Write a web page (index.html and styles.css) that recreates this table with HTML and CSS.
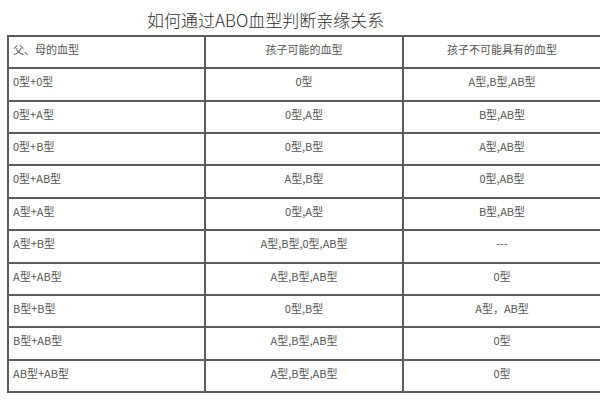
FILE: index.html
```html
<!DOCTYPE html>
<html lang="zh-CN">
<head>
<meta charset="utf-8">
<title>如何通过ABO血型判断亲缘关系</title>
<link rel="stylesheet" href="styles.css">
</head>
<body>
<h1 class="title">如何通过ABO血型判断亲缘关系</h1>
<table class="blood">
  <colgroup>
    <col class="c1"><col class="c2"><col class="c3">
  </colgroup>
  <tr class="head"><td class="left">父、母的血型</td><td>孩子可能的血型</td><td>孩子不可能具有的血型</td></tr>
  <tr><td class="left">0型+0型</td><td>0型</td><td>A型,B型,AB型</td></tr>
  <tr><td class="left">0型+A型</td><td>0型,A型</td><td>B型,AB型</td></tr>
  <tr><td class="left">0型+B型</td><td>0型,B型</td><td>A型,AB型</td></tr>
  <tr><td class="left">0型+AB型</td><td>A型,B型</td><td>0型,AB型</td></tr>
  <tr><td class="left">A型+A型</td><td>0型,A型</td><td>B型,AB型</td></tr>
  <tr><td class="left">A型+B型</td><td>A型,B型,0型,AB型</td><td>---</td></tr>
  <tr><td class="left">A型+AB型</td><td>A型,B型,AB型</td><td>0型</td></tr>
  <tr><td class="left">B型+B型</td><td>0型,B型</td><td>A型，AB型</td></tr>
  <tr><td class="left">B型+AB型</td><td>A型,B型,AB型</td><td>0型</td></tr>
  <tr><td class="left">AB型+AB型</td><td>A型,B型,AB型</td><td>0型</td></tr>
</table>
</body>
</html>
```
FILE: styles.css
```css
html, body {
  margin: 0;
  padding: 0;
  background: #fff;
}
body {
  width: 600px;
  height: 400px;
  overflow: hidden;
  font-family: "Noto Sans CJK SC", "Noto Sans", sans-serif;
}
.title {
  margin: 0;
  height: 35px;
  box-sizing: border-box;
  padding: 8px 0 0 147px;
  font-size: 17px;
  line-height: 24px;
  font-weight: 300;
  color: #2e2e2e;
}
.blood {
  margin-left: 7px;
  width: 593px;
  table-layout: fixed;
  border-collapse: collapse;
  font-size: 11px;
  color: #555;
}
.c1 { width: 197px; }
.c2 { width: 198px; }
.c3 { width: 198px; }
.blood td {
  border: 2px solid #5c5c5c;
  height: 32.36px;
  box-sizing: border-box;
  padding: 6px 4px 0;
  vertical-align: top;
  text-align: center;
  line-height: 13px;
  white-space: nowrap;
}
.blood td.left {
  text-align: left;
}
```
